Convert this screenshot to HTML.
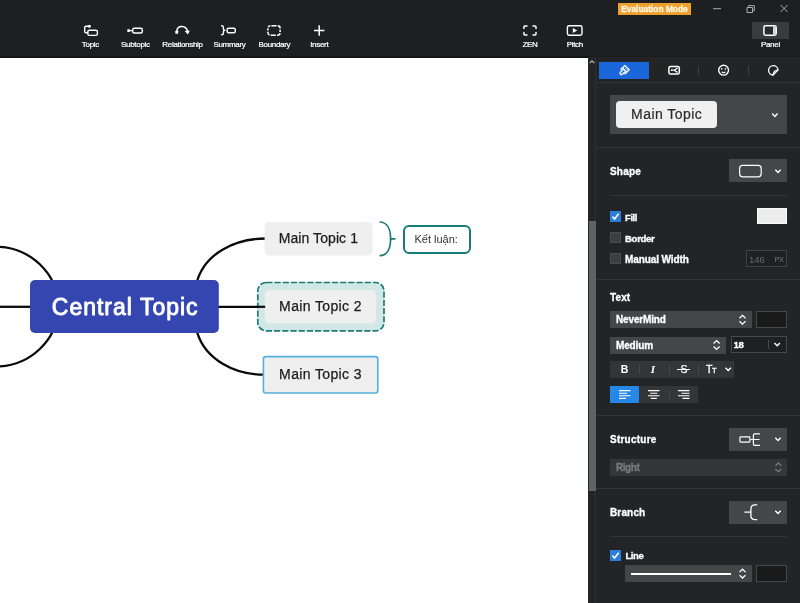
<!DOCTYPE html>
<html lang="en">
<head>
<meta charset="utf-8">
<title>Mind Map</title>
<style>
html,body{margin:0;padding:0;}
body{width:800px;height:603px;overflow:hidden;position:relative;background:#1e1f21;font-family:"Liberation Sans",sans-serif;color:#fff;}
.abs{position:absolute;}
#toolbar{will-change:transform;position:absolute;left:0;top:0;width:800px;height:58px;background:#1e1f21;}
.tb{position:absolute;top:0;height:57px;width:60px;margin-left:-30px;text-align:center;}
.tb svg{position:absolute;left:50%;top:23px;margin-left:-9px;width:18px;height:16px;}
.tb span{position:absolute;left:0;right:0;top:40.3px;font-size:8px;line-height:10px;letter-spacing:-0.3px;color:#fff;white-space:nowrap;-webkit-text-stroke:0.22px;}
#canvas{will-change:transform;position:absolute;left:0;top:58px;width:588px;height:545px;background:#fff;}
#vscroll{position:absolute;left:588px;top:57px;width:7px;height:546px;background:#222426;z-index:2;}
#vscroll .thumb{position:absolute;left:0.8px;top:164px;width:7.2px;height:270px;background:#5f6366;}
#panel{will-change:transform;position:absolute;left:595px;top:57px;width:205px;height:546px;background:#222426;border-left:1px solid #2d2f31;box-sizing:border-box;}
.sep{position:absolute;height:1px;background:#323436;}
.lbl{position:absolute;font-size:10px;font-weight:bold;color:#fff;line-height:12px;letter-spacing:-0.3px;white-space:nowrap;-webkit-text-stroke:0.32px;}
.dd{position:absolute;background:#444647;}
.cb{position:absolute;width:11px;height:11px;box-sizing:border-box;background:#3c3e40;border:1px solid #4a4c4e;}
.cb.on{background:#2b7fd9;border-color:#2b7fd9;}
</style>
</head>
<body>
<!-- TOOLBAR -->
<div id="toolbar">
<div class="abs" style="left:0;top:56px;width:589px;height:2px;background:#121314;z-index:3;"></div>
<div class="abs" style="left:589px;top:56px;width:211px;height:1px;background:#1a1b1d;"></div>
<div class="abs" style="left:752px;top:22px;width:37px;height:17px;background:#393b3d;"></div>
<svg class="abs" style="left:0;top:0;" width="800" height="57" viewBox="0 0 800 57" fill="none" stroke="#fff" stroke-width="1.4" stroke-linecap="round" stroke-linejoin="round">
  <!-- Topic -->
  <rect x="87.8" y="30.2" width="9.6" height="5.2" rx="1.6"/>
  <path d="M89 26.3 H86 Q84.7 26.3 84.7 27.6 V31.5 Q84.7 32.8 86 32.8 H87.6"/>
  <circle cx="89.4" cy="26.3" r="1.5" fill="#fff" stroke="none"/>
  <!-- Subtopic -->
  <rect x="132.7" y="28.2" width="9.6" height="4.8" rx="1.5"/>
  <path d="M129.5 30.6 H132.5"/>
  <rect x="127.3" y="29.2" width="2.6" height="2.8" rx="0.4" fill="#fff" stroke="none"/>
  <!-- Relationship -->
  <path d="M176.8 31.4 C177.2 24.9 186.4 24.9 187.6 31.8" stroke-width="1.5"/>
  <rect x="175.3" y="30.8" width="2.9" height="2.9" rx="0.4" fill="#fff" stroke="none"/>
  <path d="M184.7 31 L189.8 30.5 L187.9 34.5 Z" fill="#fff" stroke="none"/>
  <!-- Summary -->
  <path d="M221.6 25.8 Q223.4 25.8 223.4 27.4 V28.8 Q223.4 30.3 224.8 30.3 Q223.4 30.3 223.4 31.8 V33.2 Q223.4 34.8 221.6 34.8"/>
  <rect x="227.1" y="28.2" width="8.2" height="4.6" rx="1.5"/>
  <!-- Boundary -->
  <rect x="267.9" y="25.8" width="12.2" height="9.4" rx="2.4" stroke-width="1.5" stroke-linecap="butt" stroke-dasharray="0 1.1 5.2 1.1 3.77 1.1 2.4 1.1 3.77 0"/>
  <!-- Insert -->
  <path d="M319.2 25.3 V35.7 M314 30.5 H324.4" stroke-width="1.5" stroke-linecap="butt"/>
  <!-- ZEN -->
  <path d="M523.9 28.6 V27 Q523.9 26 524.9 26 H527 M533 26 H535 Q536 26 536 27 V28.6 M536 32.4 V34 Q536 35 535 35 H533 M527 35 H524.9 Q523.9 35 523.9 34 V32.4" stroke-width="1.5"/>
  <!-- Pitch -->
  <rect x="567.4" y="25.8" width="14.6" height="9.4" rx="1.6"/>
  <path d="M572.8 28 L577.2 30.5 L572.8 33 Z" fill="#fff" stroke="none"/>
  <!-- Panel -->
  <rect x="763.9" y="25.8" width="12.3" height="9.4" rx="1.6" stroke-width="1.5" fill="#2a2b2d"/>
  <rect x="773" y="26.4" width="3" height="8.2" fill="#d6d8da" stroke="none"/>
  <!-- window controls -->
  <g stroke="#a9abad" stroke-width="1" stroke-linecap="butt">
    <path d="M713 8.7 H721"/>
    <path d="M747 7.5 H752.5 V12.5 H747 Z"/>
    <path d="M748.7 7.3 V5.6 H754.3 V10.7 H752.7"/>
    <path d="M780.6 5 L787.6 12 M787.6 5 L780.6 12"/>
  </g>
</svg>
<div class="abs" style="left:618px;top:3.2px;width:73px;height:12.3px;background:#efa02c;"></div>
<div class="abs" style="left:618px;top:3.4px;width:73px;height:12px;line-height:12px;text-align:center;font-size:8.4px;font-weight:bold;color:#fff7e2;white-space:nowrap;-webkit-text-stroke:0.3px;">Evaluation Mode</div>
<div class="tb" style="left:90.4px;"><span>Topic</span></div>
<div class="tb" style="left:135.4px;"><span>Subtopic</span></div>
<div class="tb" style="left:182.5px;"><span>Relationship</span></div>
<div class="tb" style="left:229.5px;"><span>Summary</span></div>
<div class="tb" style="left:274.4px;"><span>Boundary</span></div>
<div class="tb" style="left:319.3px;"><span>Insert</span></div>
<div class="tb" style="left:530px;"><span>ZEN</span></div>
<div class="tb" style="left:574.8px;"><span>Pitch</span></div>
<div class="tb" style="left:770.4px;"><span>Panel</span></div>
</div>
<!-- CANVAS -->
<div id="canvas">
<svg class="abs" style="left:0;top:0;" width="588" height="545" viewBox="0 58 588 545">
  <g fill="none" stroke="#0a0a0a" stroke-width="2.3">
    <path d="M0 306.8 H30"/>
    <path d="M218 306.8 H266"/>
    <path d="M58.23 306.6 A62.94 59.94 0 0 0 -4.7 246.66"/>
    <path d="M58.23 306.6 A62.94 59.94 0 0 1 -4.7 366.54"/>
    <path d="M195.8 285 L197.4 280 C205.73 253.83 234.15 238.5 266 238.5"/>
    <path d="M195.8 328.2 L197.4 333.2 C205.73 359.37 234.15 374.7 264 374.7"/>
  </g>
  <!-- central topic -->
  <rect x="30" y="280" width="188.8" height="53" rx="5" fill="#3646b1"/>
  <text x="125.2" y="314.5" text-anchor="middle" font-family="'Liberation Sans',sans-serif" font-size="23" letter-spacing="1.0" fill="#fff" stroke="#fff" stroke-width="0.9" stroke-linejoin="round">Central Topic</text>
  <!-- main topic 1 -->
  <rect x="264.6" y="222" width="108" height="33.4" rx="4.5" fill="#efefef"/>
  <text x="318.4" y="243.1" text-anchor="middle" font-family="'Liberation Sans',sans-serif" font-size="14" letter-spacing="0.08" fill="#1c1c1c" stroke="#1c1c1c" stroke-width="0.25">Main Topic 1</text>
  <!-- summary brace -->
  <path d="M379.6 222 C387.6 222 390.6 230 390.6 238.8 C390.6 247.6 387.6 255.6 379.6 255.6 M390.6 238.8 H395.4" fill="none" stroke="#1b7674" stroke-width="1.7"/>
  <rect x="404" y="226" width="66" height="27" rx="5" fill="#fff" stroke="#177b7a" stroke-width="2"/>
  <text x="436.2" y="242.8" text-anchor="middle" font-family="'Liberation Sans',sans-serif" font-size="11" fill="#333">Kết luận:</text>
  <!-- main topic 2 with boundary -->
  <rect x="257.8" y="282.5" width="126.2" height="48.4" rx="8.5" fill="#d1e8e7" stroke="#1c7b79" stroke-width="1.7" stroke-dasharray="6.2 2"/>
  <rect x="264.8" y="290.2" width="111.3" height="33" rx="4.5" fill="#efefef"/>
  <path d="M256.5 306.8 H265.2" stroke="#0c0c0c" stroke-width="2.2"/>
  <text x="320.5" y="311.2" text-anchor="middle" font-family="'Liberation Sans',sans-serif" font-size="14" letter-spacing="0.37" fill="#1c1c1c" stroke="#1c1c1c" stroke-width="0.25">Main Topic 2</text>
  <!-- main topic 3 selected -->
  <rect x="263.4" y="356.6" width="114.4" height="36.4" rx="2.5" fill="#eeeeee" stroke="#55b0dd" stroke-width="1.6"/>
  <text x="320.5" y="379.1" text-anchor="middle" font-family="'Liberation Sans',sans-serif" font-size="14" letter-spacing="0.37" fill="#1c1c1c" stroke="#1c1c1c" stroke-width="0.25">Main Topic 3</text>
</svg>
</div>
<!-- SCROLLBAR -->
<div id="vscroll"><div class="thumb"></div><svg class="abs" style="left:0;top:1px;" width="8" height="8" viewBox="0 0 8 8" fill="none" stroke="#b4b6b8" stroke-width="1.2"><path d="M1.7 5.2 L4 2.9 L6.3 5.2"/></svg></div>
<!-- PANEL -->
<div id="panel">
<div class="abs" id="pin" style="left:-596px;top:-57px;width:800px;height:603px;">
<!-- up arrow of scroll -->
<!-- tabs -->
<div class="abs" style="left:599px;top:62px;width:50px;height:17px;background:#1b66db;"></div>
<div class="abs" style="left:698px;top:66px;width:1px;height:9px;background:#3f4143;"></div>
<div class="abs" style="left:748px;top:66px;width:1px;height:9px;background:#3f4143;"></div>
<svg class="abs" style="left:596px;top:57px;" width="204" height="30" viewBox="596 57 204 30" fill="none" stroke="#fff" stroke-width="1.2" stroke-linecap="round" stroke-linejoin="round">
  <!-- brush -->
  <g transform="translate(623.8 70.8) rotate(45)" stroke="#e4efff" stroke-width="1.5">
    <path d="M-3 -4.6 H3 V-0.9 H-3 Z"/>
    <path d="M-0.4 -4.4 V-2.9 M1.5 -4.4 V-2.4" stroke-width="0.9"/>
    <path d="M-3 -0.9 H3 V1 H1.4 V3.4 Q1.4 4.7 0 4.7 Q-1.4 4.7 -1.4 3.4 V1 H-3 Z"/>
  </g>
  <!-- map/share in box -->
  <rect x="668.9" y="66.4" width="10.4" height="7.6" rx="1.6" stroke-width="1.5"/>
  <path d="M671.6 70.2 H674.2 M676.8 68.5 L674.2 70.2 L676.8 71.9" stroke-width="1.2"/>
  <circle cx="676.9" cy="68.5" r="0.7" fill="#fff" stroke="none"/>
  <circle cx="676.9" cy="71.9" r="0.7" fill="#fff" stroke="none"/>
  <circle cx="671.5" cy="70.2" r="0.7" fill="#fff" stroke="none"/>
  <!-- smiley -->
  <circle cx="723.6" cy="70.2" r="4.9" stroke-width="1.4"/>
  <circle cx="721.8" cy="68.9" r="0.8" fill="#fff" stroke="none"/>
  <circle cx="725.4" cy="68.9" r="0.8" fill="#fff" stroke="none"/>
  <path d="M722 72 Q723.6 73.4 725.2 72" stroke-width="1.1"/>
  <!-- sticker -->
  <path d="M778 70.1 A4.7 4.7 0 1 0 773 75 Z" stroke-width="1.3"/>
  <path d="M778 70.1 Q773.3 70.3 773 75" stroke-width="1.1"/>
</svg>
<div class="sep" style="left:596px;top:82px;width:204px;background:#313335;"></div>
<!-- style selector -->
<div class="dd" style="left:610px;top:95px;width:177px;height:39.4px;"></div>
<div class="abs" style="left:616px;top:101.4px;width:101.4px;height:26.4px;border-radius:4px;background:#f0f0f0;color:#2b2b2b;font-size:14px;line-height:27.4px;text-align:center;letter-spacing:0.45px;-webkit-text-stroke:0.2px;">Main Topic</div>
<svg class="abs" style="left:770px;top:110px;" width="10" height="10" viewBox="0 0 10 10" fill="none" stroke="#fff" stroke-width="1.4"><path d="M2.2 3.6 L4.9 6.4 L7.6 3.6"/></svg>
<div class="sep" style="left:596px;top:146.5px;width:204px;"></div>
<!-- Shape -->
<div class="lbl" style="left:610px;top:165.8px;letter-spacing:0.2px;">Shape</div>
<div class="dd" style="left:729px;top:159.4px;width:58px;height:23px;"></div>
<svg class="abs" style="left:729px;top:159.4px;" width="58" height="23" viewBox="729 159 58 23" fill="none" stroke="#fff" stroke-width="1.2"><rect x="739.6" y="165.4" width="21.6" height="11.4" rx="3"/><path d="M775.3 169.7 L778 172.5 L780.7 169.7" stroke-width="1.4"/></svg>
<div class="sep" style="left:610px;top:195px;width:177px;"></div>
<!-- Fill -->
<div class="cb on" style="left:610px;top:211px;"></div>
<svg class="abs" style="left:610px;top:211px;" width="11" height="11" viewBox="0 0 11 11" fill="none" stroke="#fff" stroke-width="1.5"><path d="M2.4 5.6 L4.6 8 L8.6 2.8"/></svg>
<div class="lbl" style="left:625px;top:211.8px;font-size:9.5px;letter-spacing:-0.42px;">Fill</div>
<div class="abs" style="left:757px;top:208px;width:30px;height:16px;box-sizing:border-box;background:#ededed;border:1px solid #fbfbfb;"></div>
<!-- Border -->
<div class="cb" style="left:610px;top:232px;"></div>
<div class="lbl" style="left:625px;top:232.8px;font-size:9.6px;letter-spacing:-0.32px;">Border</div>
<!-- Manual width -->
<div class="cb" style="left:610px;top:253px;"></div>
<div class="lbl" style="left:625px;top:253.8px;letter-spacing:-0.1px;">Manual Width</div>
<div class="abs" style="left:746px;top:250.4px;width:41px;height:16.8px;box-sizing:border-box;border:1px solid #404244;background:#1f2022;"></div>
<div class="abs" style="left:749px;top:254.4px;font-size:9.5px;line-height:11px;color:#66686a;">146</div>
<div class="abs" style="left:774.4px;top:255px;font-size:7.5px;line-height:9px;color:#747678;letter-spacing:-0.3px;">PX</div>
<div class="sep" style="left:596px;top:279px;width:204px;"></div>
<!-- Text -->
<div class="lbl" style="left:610px;top:292px;letter-spacing:0.12px;">Text</div>
<div class="dd" style="left:610px;top:311px;width:142px;height:17px;"></div>
<div class="lbl" style="left:616px;top:314px;font-size:10px;letter-spacing:-0.15px;">NeverMind</div>
<div class="abs" style="left:756px;top:311px;width:31px;height:17px;box-sizing:border-box;background:#1a1a1b;border:1px solid #46484a;"></div>
<div class="dd" style="left:610px;top:336.5px;width:116px;height:17px;"></div>
<div class="lbl" style="left:616px;top:339.5px;font-size:10px;letter-spacing:-0.15px;">Medium</div>
<div class="abs" style="left:730.5px;top:336.3px;width:56.5px;height:17px;box-sizing:border-box;background:#1f2022;border:1px solid #46484a;"></div>
<div class="lbl" style="left:733px;top:339px;font-size:9.6px;letter-spacing:-0.3px;left:733.4px;">18</div>
<div class="abs" style="left:768px;top:340.4px;width:1px;height:8.4px;background:#46484a;"></div>
<!-- BIU row -->
<div class="abs" style="left:610px;top:361px;width:124px;height:17px;background:#333537;"></div>
<div class="abs" style="left:639px;top:365px;width:1px;height:9px;background:#46484a;"></div>
<div class="abs" style="left:669px;top:365px;width:1px;height:9px;background:#46484a;"></div>
<div class="abs" style="left:698px;top:365px;width:1px;height:9px;background:#46484a;"></div>
<div class="abs" style="left:610px;top:363px;width:29px;text-align:center;font-size:10.5px;line-height:13px;font-weight:bold;color:#fff;">B</div>
<div class="abs" style="left:640px;top:363px;width:26px;text-align:center;font-size:11px;line-height:13px;font-style:italic;font-weight:bold;font-family:'Liberation Serif',serif;color:#fff;">I</div>
<div class="abs" style="left:670px;top:363px;width:28px;text-align:center;font-size:10.5px;line-height:13px;color:#fff;-webkit-text-stroke:0.25px;">S</div>
<div class="abs" style="left:677px;top:369px;width:13px;height:1px;background:#fff;"></div>
<div class="abs" style="left:706px;top:363px;font-size:10.5px;line-height:13px;color:#fff;letter-spacing:-0.5px;-webkit-text-stroke:0.3px;">T<span style="font-size:7.5px;">T</span></div>
<!-- Align row -->
<div class="abs" style="left:610px;top:386px;width:88px;height:17px;background:#333537;"></div>
<div class="abs" style="left:610px;top:386px;width:29px;height:17px;background:#2587e6;"></div>
<div class="abs" style="left:669px;top:390px;width:1px;height:9px;background:#46484a;"></div>
<svg class="abs" style="left:596px;top:300px;" width="204" height="150" viewBox="596 300 204 150" fill="none" stroke="#fff" stroke-width="1.2">
  <path d="M739.5 318.3 L742.5 315.40000000000003 L745.5 318.3 M739.5 321.3 L742.5 324.2 L745.5 321.3" fill="none" stroke="#fff" stroke-width="1.3"/>
  <path d="M713.6 343.5 L716.6 340.6 L719.6 343.5 M713.6 346.5 L716.6 349.4 L719.6 346.5" fill="none" stroke="#fff" stroke-width="1.3"/>
  <path d="M774.5 342.9 L777.2 345.7 L779.9 342.9" stroke-width="1.4"/>
  <path d="M725.5 367.8 L728.2 370.6 L730.9 367.8" stroke-width="1.4"/>
  <g stroke-width="1.1">
   <path d="M619 390.6 H630.5 M619 393.2 H627 M619 395.8 H630.5 M619 398.4 H626"/>
   <path d="M648 390.6 H659.5 M650.2 393.2 H657.3 M648 395.8 H659.5 M650.7 398.4 H656.8"/>
   <path d="M678 390.6 H689.5 M681.5 393.2 H689.5 M678 395.8 H689.5 M682.5 398.4 H689.5"/>
  </g>
</svg>
<div class="sep" style="left:596px;top:415px;width:204px;"></div>
<!-- Structure -->
<div class="lbl" style="left:610px;top:434px;letter-spacing:0.24px;">Structure</div>
<div class="dd" style="left:729px;top:428px;width:58px;height:23px;"></div>
<div class="abs" style="left:610px;top:459px;width:177px;height:17px;background:#343638;"></div>
<div class="lbl" style="left:616px;top:462px;font-size:10px;color:#77797b;letter-spacing:-0.45px;">Right</div>
<div class="sep" style="left:596px;top:488px;width:204px;"></div>
<!-- Branch -->
<div class="lbl" style="left:610px;top:506.5px;letter-spacing:0.15px;">Branch</div>
<div class="dd" style="left:729px;top:501px;width:58px;height:23px;"></div>
<div class="sep" style="left:610px;top:536px;width:177px;"></div>
<!-- Line -->
<div class="cb on" style="left:610px;top:549.5px;"></div>
<svg class="abs" style="left:610px;top:549.5px;" width="11" height="11" viewBox="0 0 11 11" fill="none" stroke="#fff" stroke-width="1.5"><path d="M2.4 5.6 L4.6 8 L8.6 2.8"/></svg>
<div class="lbl" style="left:625.5px;top:550px;font-size:9.5px;letter-spacing:-0.45px;">Line</div>
<div class="dd" style="left:625px;top:565px;width:127px;height:17px;"></div>
<div class="abs" style="left:756px;top:565px;width:31px;height:17px;box-sizing:border-box;background:#1a1a1b;border:1px solid #46484a;"></div>
<svg class="abs" style="left:596px;top:420px;" width="204" height="183" viewBox="596 420 204 183" fill="none" stroke="#fff" stroke-width="1.2">
  <!-- structure icon -->
  <rect x="739.9" y="436.9" width="10" height="5.2" rx="0.8"/>
  <path d="M750.4 439.5 H753.4 M759.9 433.9 H754.8 Q753.4 433.9 753.4 435.3 V444 Q753.4 445.4 754.8 445.4 H759.9 M753.4 439.5 H759.6"/>
  <path d="M775.3 437.7 L778 440.5 L780.7 437.7" stroke-width="1.4"/>
  <path d="M775.4 465.9 L778.4 463.0 L781.4 465.9 M775.4 468.9 L778.4 471.79999999999995 L781.4 468.9" fill="none" stroke="#77797b" stroke-width="1.3"/>
  <!-- branch icon -->
  <path d="M744.4 512.2 H750.9 M757.2 504.9 H755 Q750.9 504.9 750.9 509 V515.5 Q750.9 519.6 755 519.6 H757.2" stroke-width="1.3"/>
  <path d="M775.3 510.7 L778 513.5 L780.7 510.7" stroke-width="1.4"/>
  <!-- line -->
  <path d="M631 574 H731" stroke-width="1.9"/>
  <path d="M739.5 572.1 L742.5 569.2 L745.5 572.1 M739.5 575.1 L742.5 578.0 L745.5 575.1" fill="none" stroke="#fff" stroke-width="1.3"/>
</svg>
<!--PANEL3-->
</div>
</div>
</body>
</html>
